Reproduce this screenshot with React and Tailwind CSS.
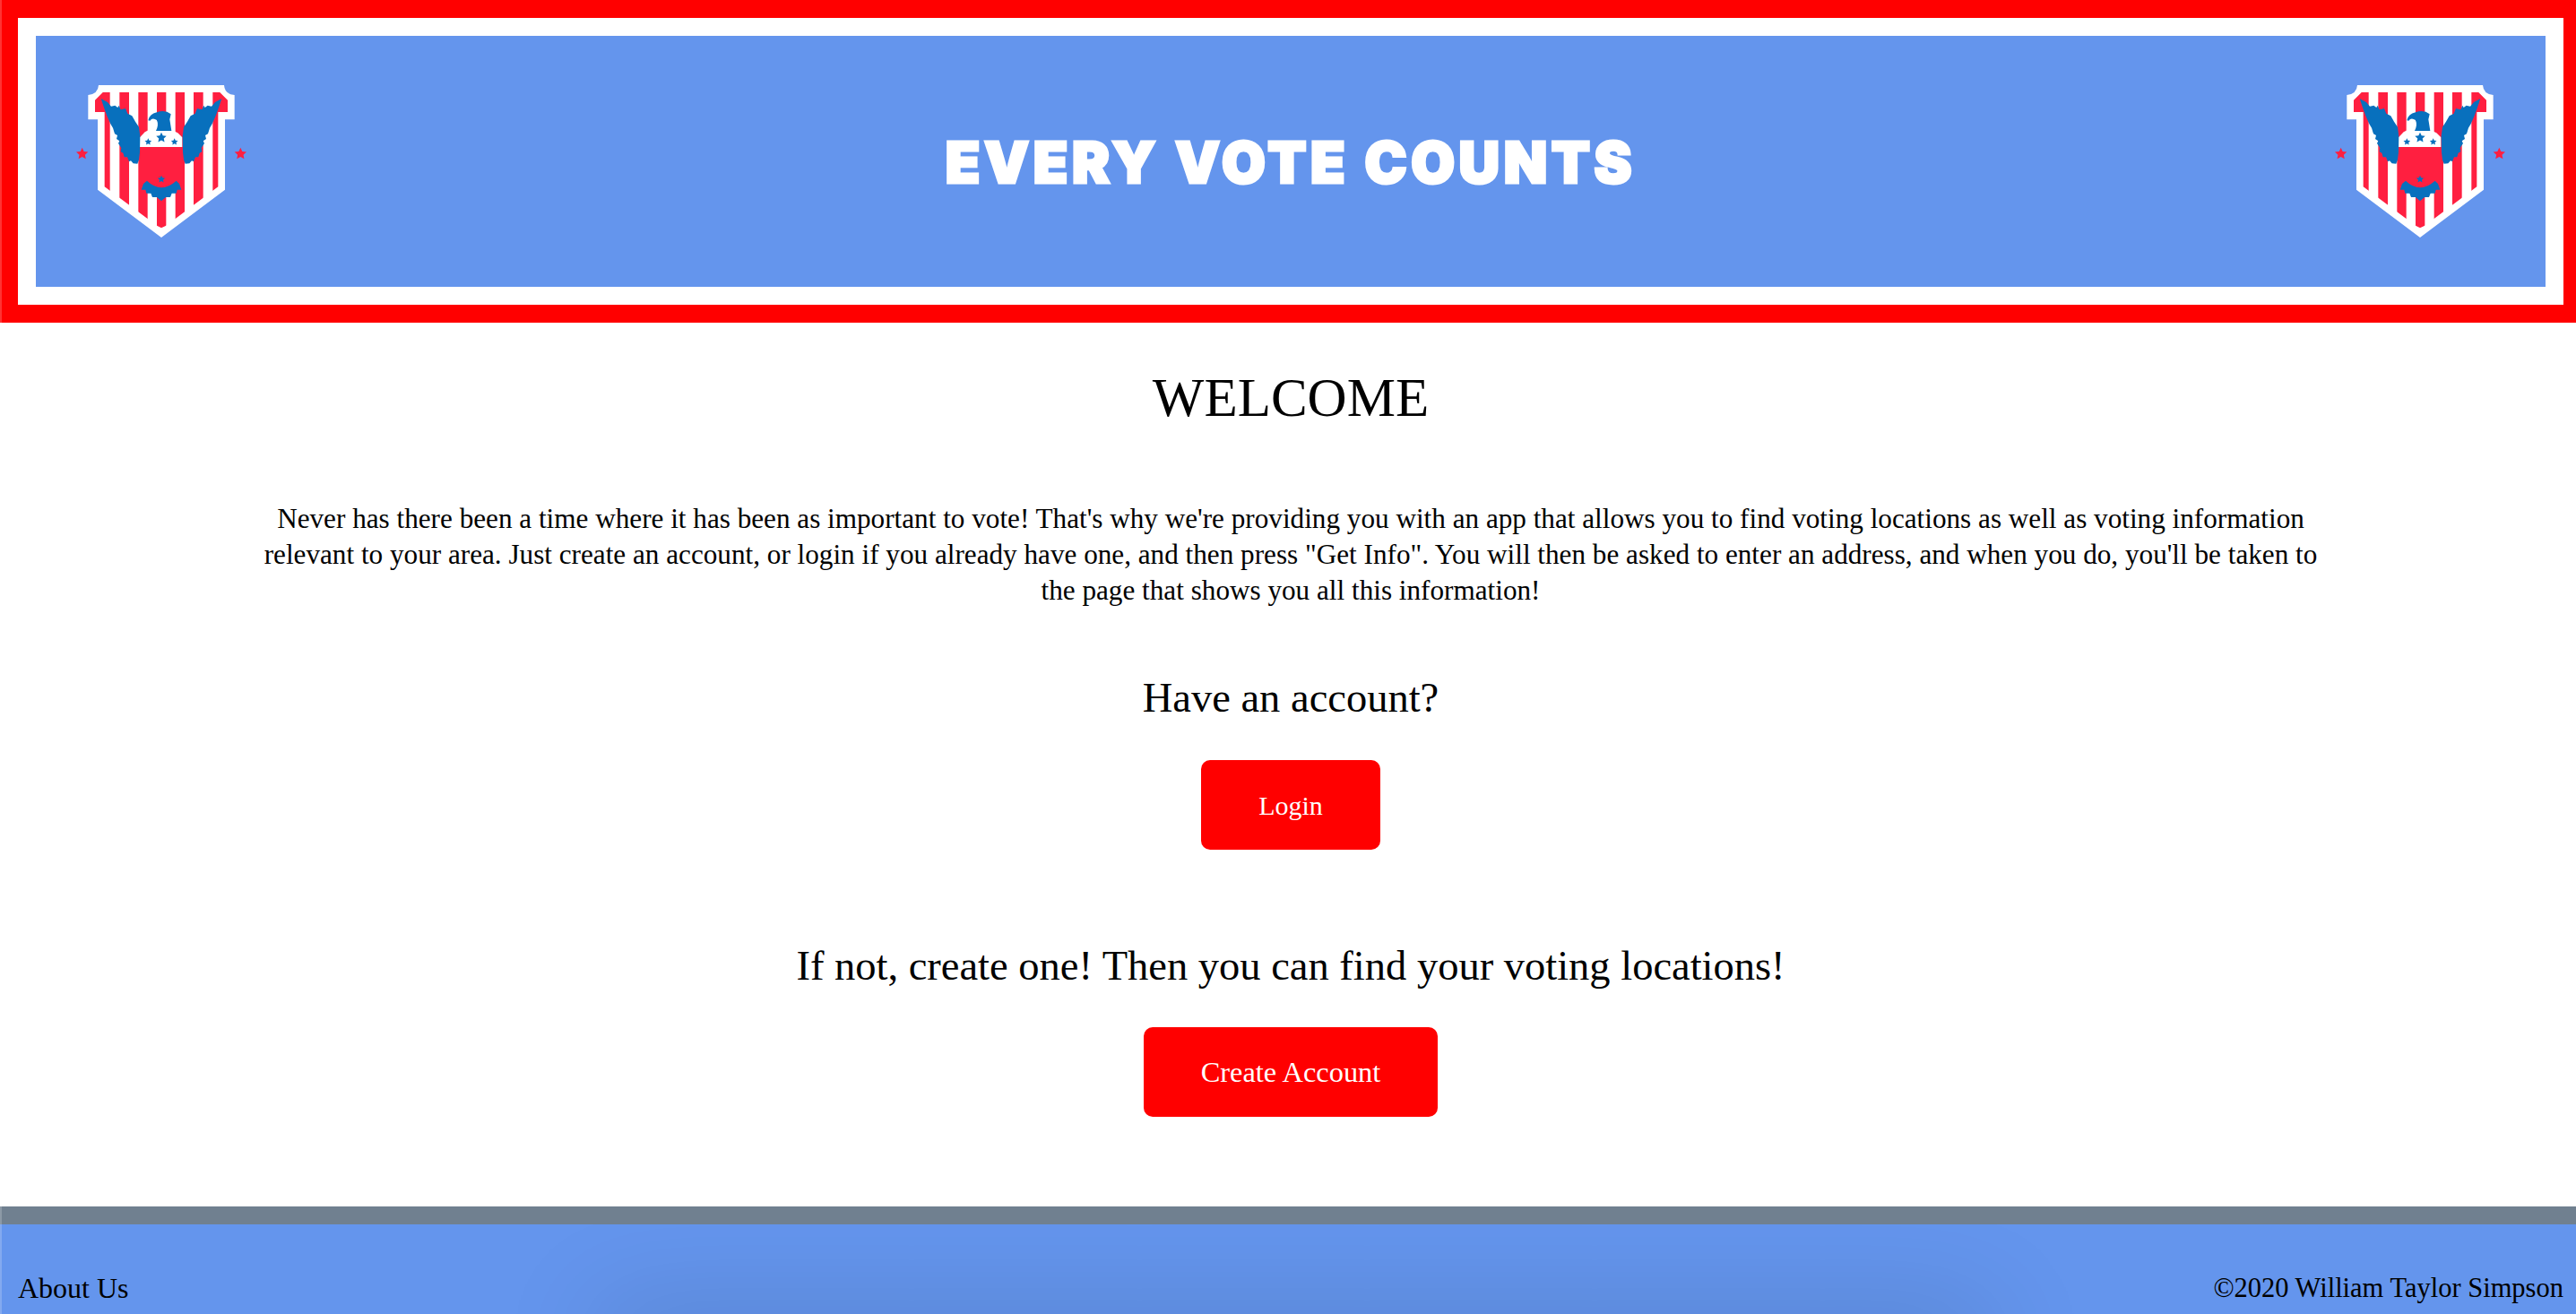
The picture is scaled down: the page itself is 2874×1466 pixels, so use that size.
import React from 'react';

const RED = '#ff1f40';
const BLUE = '#0870bd';

// five point star centred on cx, cy
const starPoints = (cx, cy, r) => {
  const pts = [];
  for (let i = 0; i < 10; i++) {
    const rad = i % 2 === 0 ? r : r * 0.48;
    const a = -Math.PI / 2 + (i * Math.PI) / 5;
    pts.push(`${(cx + rad * Math.cos(a)).toFixed(1)},${(cy + rad * Math.sin(a)).toFixed(1)}`);
  }
  return pts.join(' ');
};

const WING =
  '158,120 180,132 192,146 205,143 214,150 218,143 224,157 240,153 247,170 262,178 273,197 285,215 289,245 288,300 285,325 280,338 266,337 258,328 252,331 246,316 236,316 232,302 224,298 226,285 216,270 220,262 210,255 213,243 204,238 198,218 190,205 178,178 168,150';

const Logo = () => (
  <svg viewBox="0 0 720 630" className="h-[210px] w-[240px] shrink-0">
    <defs>
      <clipPath id="inner">
        <polygon points="165,98 138,125 138,165 170,165 170,415 345,545 360,553 376,545 550,415 550,165 582,165 582,125 555,98" />
      </clipPath>
    </defs>
    <path
      d="M150 75 H570 Q572 105 605 108 V190 H573 V425 L360 585 L147 425 V190 H115 V108 Q148 105 150 75 Z"
      fill="#fff"
    />
    <g clipPath="url(#inner)" fill={RED}>
      <rect x="138" y="98" width="50" height="470" />
      <rect x="220" y="98" width="32" height="470" />
      <rect x="283" y="98" width="31" height="470" />
      <rect x="345" y="98" width="31" height="470" />
      <rect x="407" y="98" width="31" height="470" />
      <rect x="468" y="98" width="32" height="470" />
      <rect x="532" y="98" width="50" height="470" />
    </g>
    <polygon points="318,195 352,195 352,225 395,225 415,235 430,250 430,282 288,282 288,250 305,232 318,225" fill="#fff" />
    <polygon points="288,282 430,282 432,400 360,440 288,400" fill={RED} />
    <polygon points={WING} fill={BLUE} />
    <polygon points={WING} fill={BLUE} transform="translate(720 0) scale(-1 1)" />
    <path
      d="M316 193 Q320 172 345 166 Q372 156 392 172 L388 190 L394 228 H342 Q352 208 345 192 Q330 182 322 194 Z"
      fill={BLUE}
    />
    <path
      d="M293 425 L300 405 L312 395 Q360 440 410 395 L420 405 L427 425 L413 425 L410 437 L395 437 L390 450 L375 450 L360 463 L345 450 L330 450 L325 437 L310 437 L307 425 Z"
      fill={BLUE}
    />
    <polygon points={starPoints(360, 251, 18)} fill={BLUE} />
    <polygon points={starPoints(316, 265, 12)} fill={BLUE} />
    <polygon points={starPoints(404, 265, 12)} fill={BLUE} />
    <polygon points={starPoints(360, 390, 13)} fill={BLUE} />
    <polygon points={starPoints(95, 305, 21)} fill={RED} />
    <polygon points={starPoints(625, 305, 21)} fill={RED} />
  </svg>
);

const Button = ({ children, className }) => (
  <button type="button" className={`h-[100px] rounded-[10px] bg-[#ff0000] text-white ${className}`}>
    {children}
  </button>
);

export default function App() {
  return (
    <div className="relative h-[1466px] w-[2874px] overflow-hidden bg-white font-['Liberation_Serif',serif] text-black">
      {/* the page runs slightly wider than the window */}
      <div className="w-[2880px]">
        <header className="h-[360px] border-[20px] border-[#ff0000] bg-white p-[20px]">
          <div className="flex h-[280px] items-start justify-between bg-[#6495ed] px-[20px] pt-[30px]">
            <Logo />
            <h1 className="mt-[66px] font-['Inter',sans-serif] text-[63px] font-black leading-[90px] tracking-[4.6px] text-white [-webkit-text-stroke:3px_white]">
              EVERY VOTE COUNTS
            </h1>
            <Logo />
          </div>
        </header>

        <main className="flex h-[986px] flex-col items-center">
          <h2 className="mt-[54px] text-[61px] leading-[60px]">WELCOME</h2>
          <p className="mt-[85px] w-[80%] text-center text-[31.2px] leading-[40px]">
            Never has there been a time where it has been as important to vote! That's why we're providing you with an
            app that allows you to find voting locations as well as voting information relevant to your area. Just
            create an account, or login if you already have one, and then press "Get Info". You will then be asked to
            enter an address, and when you do, you'll be taken to the page that shows you all this information!
          </p>
          <h3 className="mt-[70px] text-[46.5px] leading-[60px]">Have an account?</h3>
          <Button className="mt-[39px] w-[200px] text-[30px]">Login</Button>
          <h3 className="mt-[100px] text-[46.5px] leading-[60px]">
            If not, create one! Then you can find your voting locations!
          </h3>
          <Button className="mt-[38px] w-[328px] text-[32.4px]">Create Account</Button>
        </main>

        <footer className="relative flex h-[120px] items-end justify-between overflow-hidden border-t-[20px] border-[#708090] bg-[#6495ed] px-[20px] pb-[5px]">
          <div className="absolute -bottom-[60px] left-[670px] h-[60px] w-[1550px] shadow-[0_0_120px_rgba(0,0,0,0.17)]" />
          <a href="#about" className="relative text-[32px]">
            About Us
          </a>
          <span className="relative text-[30.5px]">©2020 William Taylor Simpson</span>
        </footer>
      </div>
      <div className="pointer-events-none absolute inset-y-0 left-0 w-[2px] bg-white/20" />
    </div>
  );
}
